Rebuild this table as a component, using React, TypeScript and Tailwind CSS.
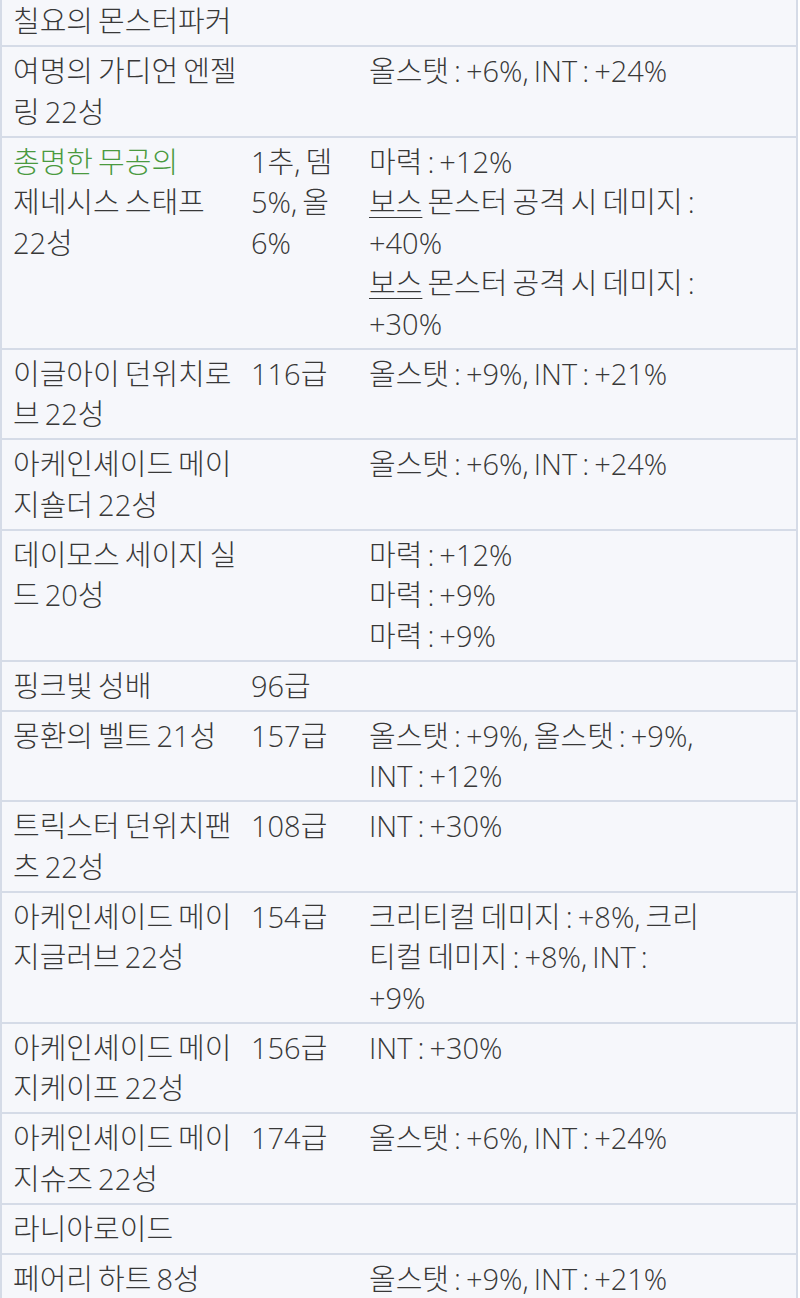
const FONT = "font-['Open_Sans','Noto_Sans_CJK_KR',sans-serif]";

type Row = {
  name: React.ReactNode;
  grade?: string;
  options?: React.ReactNode[];
};

const Boss = ({ value }: { value: string }) => (
  <>
    <span className="underline underline-offset-[4px] decoration-1">보스</span> 몬스터 공격 시 데미지 : {value}
  </>
);

const ROWS: Row[] = [
  { name: "칠요의 몬스터파커" },
  { name: "여명의 가디언 엔젤링 22성", options: ["올스탯 : +6%, INT : +24%"] },
  {
    name: (
      <>
        <div className="text-[#4a9a3f]">총명한 무공의</div>
        <div>제네시스 스태프 22성</div>
      </>
    ),
    grade: "1추, 뎀 5%, 올 6%",
    options: ["마력 : +12%", <Boss value="+40%" />, <Boss value="+30%" />],
  },
  { name: "이글아이 던위치로브 22성", grade: "116급", options: ["올스탯 : +9%, INT : +21%"] },
  { name: "아케인셰이드 메이지숄더 22성", options: ["올스탯 : +6%, INT : +24%"] },
  { name: "데이모스 세이지 실드 20성", options: ["마력 : +12%", "마력 : +9%", "마력 : +9%"] },
  { name: "핑크빛 성배", grade: "96급" },
  { name: "몽환의 벨트 21성", grade: "157급", options: ["올스탯 : +9%, 올스탯 : +9%, INT : +12%"] },
  { name: "트릭스터 던위치팬츠 22성", grade: "108급", options: ["INT : +30%"] },
  {
    name: "아케인셰이드 메이지글러브 22성",
    grade: "154급",
    options: ["크리티컬 데미지 : +8%, 크리티컬 데미지 : +8%, INT : +9%"],
  },
  { name: "아케인셰이드 메이지케이프 22성", grade: "156급", options: ["INT : +30%"] },
  { name: "아케인셰이드 메이지슈즈 22성", grade: "174급", options: ["올스탯 : +6%, INT : +24%"] },
  { name: "라니아로이드" },
  { name: "페어리 하트 8성", options: ["올스탯 : +9%, INT : +21%"] },
];

export default function App() {
  return (
    <div className={`bg-white min-h-[1298px] overflow-hidden ${FONT}`}>
      <table className="-mt-[3px] w-[798px] table-fixed border-collapse bg-[#f6f7fb] text-[29px] font-light leading-[40.5px] text-[#383838] [word-spacing:-2.5px]">
        <colgroup>
          <col className="w-[240px]" />
          <col className="w-[118px]" />
          <col />
        </colgroup>
        <tbody>
          {ROWS.map((r, i) => (
            <tr key={i} className="border-x-2 border-b-2 border-[#d5dbe7] align-top">
              <td className="pl-[11px] pr-[3px] pt-[4px] pb-[3.5px]">{r.name}</td>
              <td className="pl-[10px] pr-[8px] pt-[4px] pb-[3.5px]">{r.grade}</td>
              <td className="pl-[10px] pr-[92px] pt-[4px] pb-[3.5px]">
                {r.options?.map((o, j) => (
                  <div key={j}>{o}</div>
                ))}
              </td>
            </tr>
          ))}
        </tbody>
      </table>
    </div>
  );
}
